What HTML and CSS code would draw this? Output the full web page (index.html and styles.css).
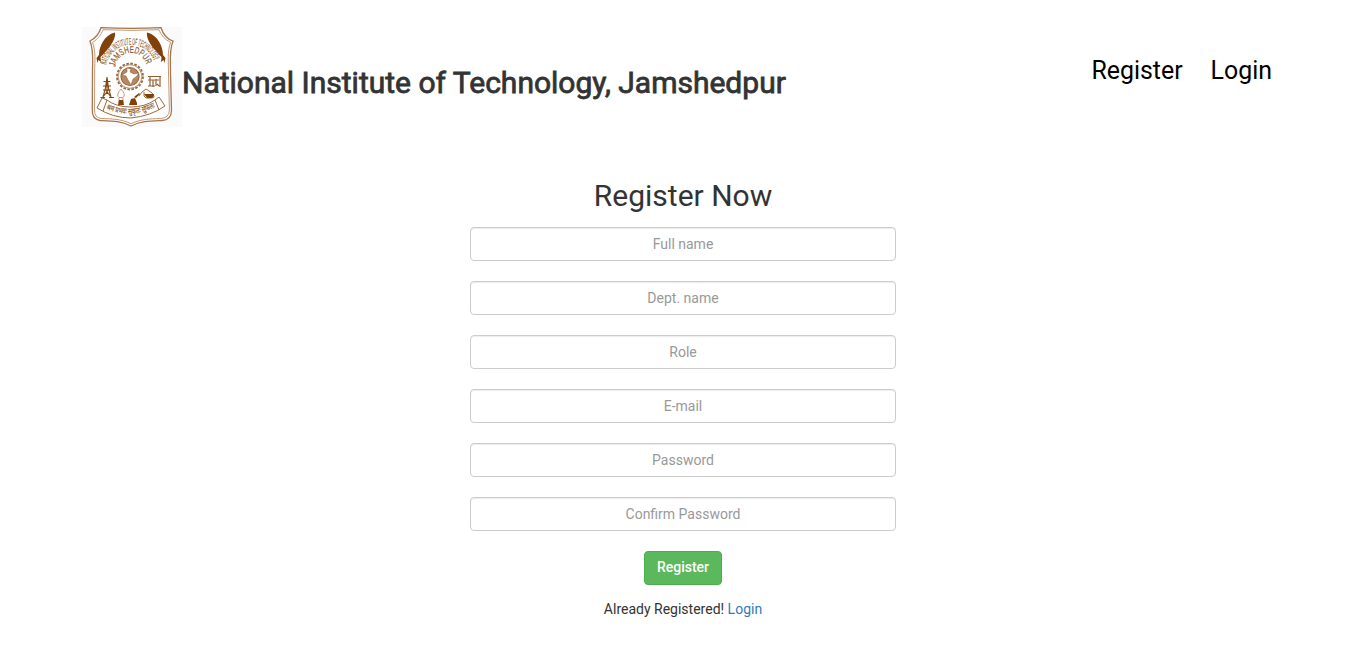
FILE: index.html
```html
<!DOCTYPE html>
<html lang="en">
<head>
<meta charset="utf-8">
<title>Register</title>
<link rel="stylesheet" href="styles.css">
</head>
<body>
<header class="header">
  <div class="brand">
    <svg class="crest" viewBox="0 0 100 100" role="img" aria-label="Institute crest">
      <rect width="100" height="100" fill="#fafafa"/>
      <path d="M19 .7Q49 2 79 .7C81 7 85 12 91 14C87 24 88.500 34 88.500 46L89.500 84Q89 93 80 93.500C68 94 59 94 49 99C39 94 30 94 18 93.500Q10 92 10.300 83L10.500 45C10.500 33 12 24 8 14C14 11 17 7 19 .7Z" fill="#fff" stroke="#a6754d" stroke-width="1.300"/>
      <path d="M21 2.700Q49 4 77 2.700C79 8 83 13 88.700 15.300C85 25 86.500 35 86.500 46L87.400 83Q87 91 79 91.400C67 92 59 92 49 96.700C39 92 31 92 19 91.400Q12.500 91 12.500 83L12.700 45C12.700 33 14 25 10.500 15.300C16 12 19 8 21 2.700Z" fill="none" stroke="#b98d69" stroke-width=".9"/>
      <g fill="#804008">
        <path d="M33 5.500C34 10 30 18 24 24Q21 28 18.500 30L19 35L16.500 33L15.500 36L14.500 31L17 28C17 20 22 8 33 5.500Z"/>
        <path d="M65 5.500C64 10 68 18 74 24Q77 28 79.500 30L79 35L81.500 33L82.500 36L83.500 31L81 28C81 20 76 8 65 5.500Z"/>
      </g>
      <path id="outer" d="M24.500 38C31 11 67 11 73.500 38" fill="none"/>
      <path id="inner" d="M33 40C37 21 61 21 65 40" fill="none"/>
      <g class="motto">
        <text font-size="9.500"><textPath href="#outer" textLength="64" lengthAdjust="spacingAndGlyphs">NATIONAL INSTITUTE OF TECHNOLOGY</textPath></text>
        <text font-size="9.500"><textPath href="#inner" textLength="44" lengthAdjust="spacingAndGlyphs">JAMSHEDPUR</textPath></text>
      </g>
      <g fill="none" stroke="#9b673c">
        <circle cx="48" cy="49.500" r="13" stroke-width="1.800" stroke-dasharray="2.600 1.480"/>
        <circle cx="48" cy="49.500" r="11.800" stroke-width=".7"/>
        <circle cx="48" cy="49.500" r="9" stroke-width="1.200" fill="#b98863"/>
      </g>
      <path d="M45 41L49 42L48 45L52 47L57 46L54 50L51 52L49 58L46 53L44 49L40 48L45 45Z" fill="#fff" stroke="#8b5527" stroke-width=".5"/>
      <g fill="none" stroke="#84480f" stroke-width="1.100">
        <path d="M25 50L23.500 61L21 70M25 50L26.500 61L29 70M25 50V67M21.500 54.500H28.500M21 59H29M21 63H29M21 70L27 62M29 70L23 62M18.500 70.500H23M27 70.500H32"/>
        <path d="M66 49.500H79M68 49V59M78 49V60M66 53H77M71 53V60M74 52V59M66 59H73M75 57L77 59" stroke-width="1.200" stroke="#97602f"/>
        <path d="M57 69L60 65L64 62L70 66Q74 71 70 71H64Q61 70 62 65" stroke-width=".8"/>
        <path d="M39 62Q33.500 68 37 70.500H41Q44.500 68 39 62M37 71V76M41 71V76" stroke-width=".8" stroke="#b78359"/>
      </g>
      <path d="M62 67H72Q72 71 69 71H65ZM37 73H41L42 78H36ZM49 72L53 71L55 76V78H47ZM52 70L57 66L58 67L54 71Z" fill="#804008"/>
      <path d="M20 71L15 81Q31 91 49 91Q69 89 83 79L77 70L73 73Q63 80 49 80Q34 80 25 73ZM25 73L21 84M73 73L77 83" fill="#fff" stroke="#9b673c" stroke-width="1"/>
      <path id="ribbon" d="M24 82Q49 93 75 79.500" fill="none"/>
      <text class="motto hindi" font-size="8"><textPath href="#ribbon" textLength="51" lengthAdjust="spacingAndGlyphs">श्रम प्रभवः सुकृतः सुफलः</textPath></text>
    </svg>
    <h1 class="name">National Institute of Technology, Jamshedpur</h1>
  </div>
  <nav class="nav"><a href="#">Register</a><a href="#">Login</a></nav>
</header>
<main>
  <form class="form">
    <h2 class="heading">Register Now</h2>
    <input class="field" type="text" placeholder="Full name">
    <input class="field" type="text" placeholder="Dept. name">
    <input class="field" type="text" placeholder="Role">
    <input class="field" type="email" placeholder="E-mail">
    <input class="field" type="password" placeholder="Password">
    <input class="field" type="password" placeholder="Confirm Password">
    <button class="submit" type="button">Register</button>
    <p class="note">Already Registered! <a href="#">Login</a></p>
  </form>
</main>
</body>
</html>
```
FILE: styles.css
```css
* { box-sizing: border-box; }
body { margin: 0; background: #fff; color: #333; font: 14px/20px Roboto, sans-serif; }
a { color: #337ab7; text-decoration: none; }
.header { display: flex; justify-content: space-between; height: 177px; padding: 27px 94px 0 82px; }
.brand { display: flex; align-items: flex-start; }
.crest { width: 100px; height: 100px; flex: none; }
.motto { font-family: "Liberation Sans", sans-serif; fill: #8b5527; stroke: #8b5527; stroke-width: .15px; }
.hindi { font-family: "Noto Sans Devanagari", "Noto Sans", sans-serif; }
.name { margin: 39px 0 0; font-size: 30px; line-height: 33px; font-weight: 400; -webkit-text-stroke: .8px #333; white-space: nowrap; }
.nav { display: flex; gap: 28px; padding-top: 26px; font-size: 24.9px; line-height: 35px; }
.nav a { color: #000; }
.form { display: flex; flex-direction: column; align-items: center; width: 426px; margin: 0 auto; }
.heading { margin: 2px 0 15px; font-size: 30px; line-height: 33px; font-weight: 400; }
.field { width: 100%; height: 34px; margin: 0 0 20px; padding: 6px 12px; border: 1px solid #ccc; border-radius: 4px; box-shadow: inset 0 1px 1px rgba(0, 0, 0, .075); font: inherit; text-align: center; }
.field::placeholder { color: #999; opacity: 1; }
.submit { height: 34px; padding: 5px 12px 7px; border: 1px solid #4cae4c; border-radius: 4px; background: #5cb85c; color: #fff; font: 500 14px/20px Roboto, sans-serif; }
.note { margin: 14px 0 0; }
```
